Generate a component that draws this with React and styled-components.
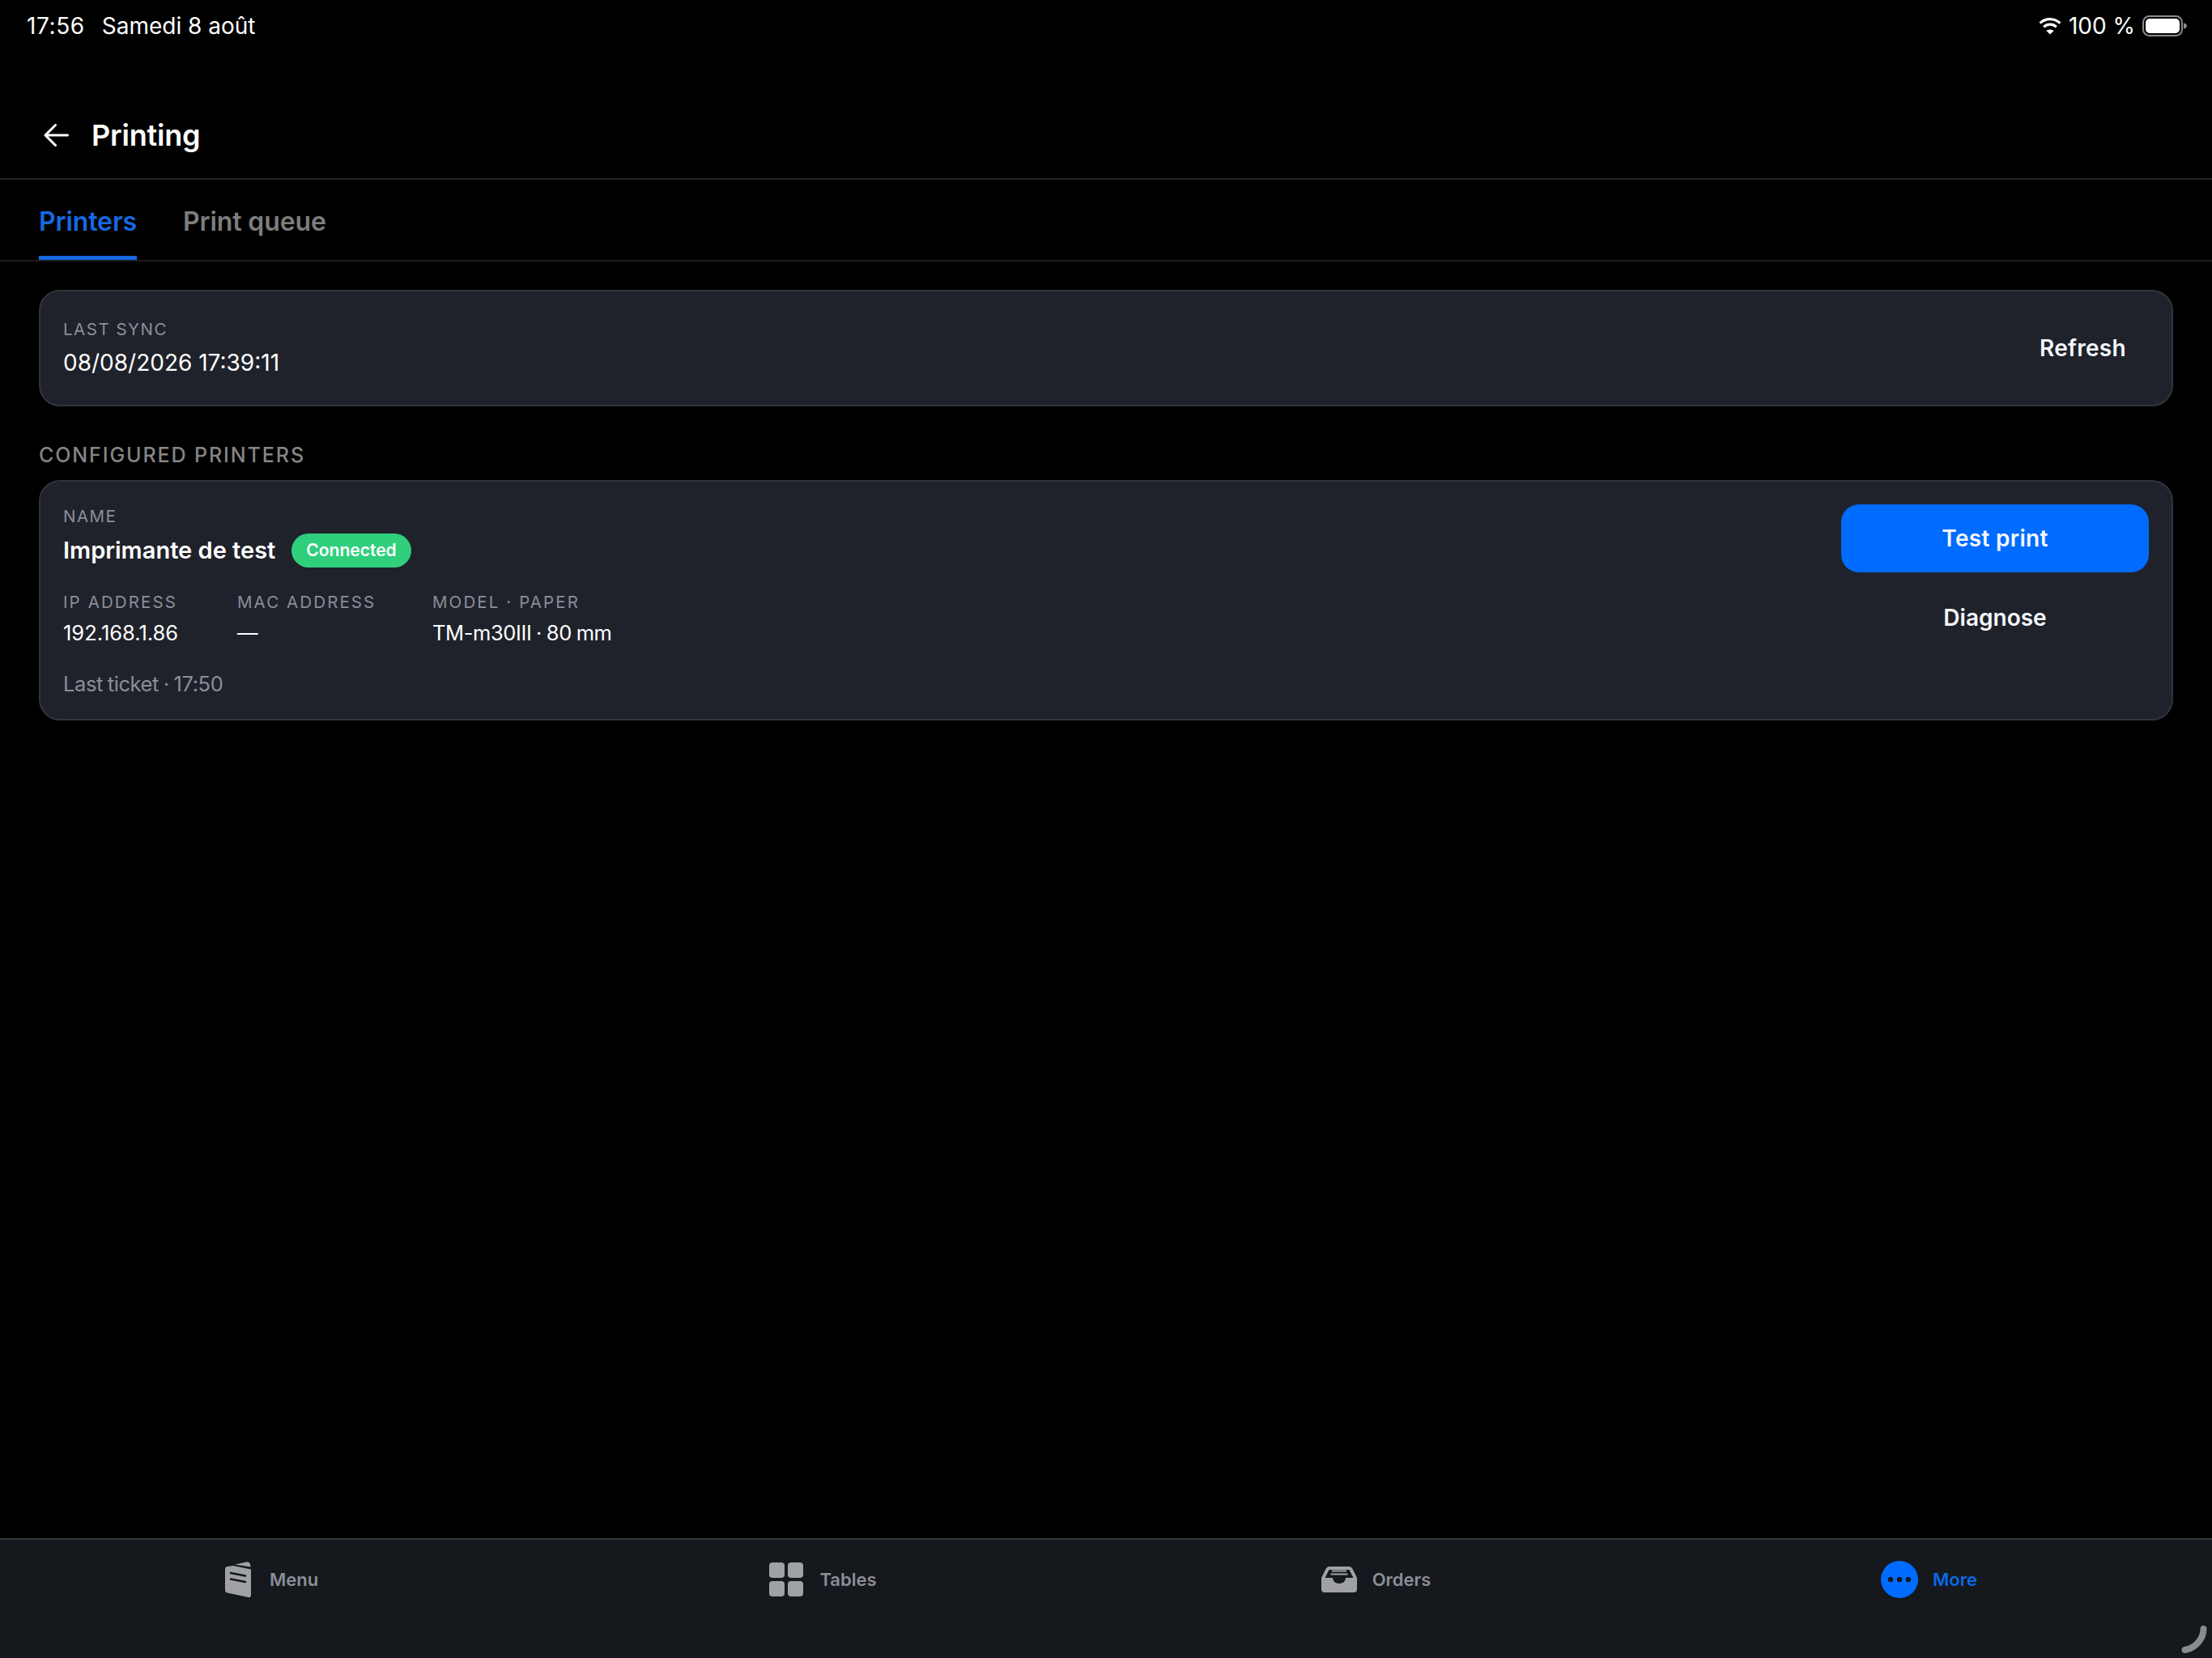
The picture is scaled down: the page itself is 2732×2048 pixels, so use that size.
import React from "react";
import styled, { createGlobalStyle } from "styled-components";

const Global = createGlobalStyle`
  html, body { margin: 0; padding: 0; background: #000; }
  * { box-sizing: border-box; }
  body { font-family: Inter, "Liberation Sans", sans-serif; }
`;

const Page = styled.div`
  position: relative;
  width: 2732px;
  height: 2048px;
  background: #000;
  color: #fff;
  display: flex;
  flex-direction: column;
  overflow: hidden;
`;

const StatusBar = styled.div`
  height: 64px;
  padding: 0 30px 0 33px;
  display: flex;
  align-items: center;
  justify-content: space-between;
  font-size: 28px;
  line-height: 34px;
`;
const StatusGroup = styled.div`
  display: flex;
  align-items: center;
  gap: ${(p) => p.$gap}px;
`;
const Clock = styled.span`
  letter-spacing: 0.6px;
`;

const Header = styled.header`
  height: 158px;
  padding: 50px 0 0 54px;
  display: flex;
  align-items: center;
  gap: 28px;
  border-bottom: 2px solid #232323;
`;
const Title = styled.h1`
  margin: 0;
  font-size: 36px;
  font-weight: 600;
  line-height: 42px;
  letter-spacing: -0.2px;
`;

const Tabs = styled.nav`
  height: 101px;
  padding: 0 48px;
  display: flex;
  gap: 57px;
  border-bottom: 2px solid #1d1d1d;
`;
const Tab = styled.div`
  height: 99px;
  padding-top: 33px;
  font-size: 32px;
  line-height: 38px;
  font-weight: 600;
  letter-spacing: -0.1px;
  color: ${(p) => (p.$active ? "#1769e0" : "#7d7d7d")};
  border-bottom: 5px solid ${(p) => (p.$active ? "#1769e0" : "transparent")};
`;

const Content = styled.main`
  flex: 1;
  padding: 35px 48px 0;
  display: flex;
  flex-direction: column;
`;

const Card = styled.section`
  background: #1f222b;
  border: 2px solid #31343d;
  border-radius: 26px;
  padding: 28px;
  display: flex;
  justify-content: space-between;
`;
const SyncCard = styled(Card)`
  height: 144px;
  align-items: center;
  padding-top: 0;
  padding-bottom: 0;
`;
const PrinterCard = styled(Card)`
  height: 297px;
`;

const Label = styled.div`
  font-size: 20.5px;
  line-height: 25px;
  letter-spacing: 1.5px;
  color: #8b8e99;
`;
const FieldLabel = styled(Label)`
  letter-spacing: 2.1px;
`;
const SyncBlock = styled.div`
  padding-bottom: 2px;
`;
const SyncValue = styled.div`
  margin-top: 12px;
  font-size: 28px;
  line-height: 34px;
`;

const SectionLabel = styled.h2`
  margin: 46px 0 16px;
  font-size: 25px;
  line-height: 29px;
  font-weight: 500;
  letter-spacing: 1.9px;
  color: #858585;
`;

const NameBlock = styled.div`
  margin-top: 2px;
`;
const NameRow = styled.div`
  margin-top: 9px;
  display: flex;
  align-items: center;
  gap: 20px;
`;
const Name = styled.div`
  font-size: 29px;
  line-height: 42px;
  font-weight: 600;
`;
const Badge = styled.span`
  height: 42px;
  padding: 0 18px;
  border-radius: 21px;
  background: #2fcf7c;
  font-size: 21px;
  line-height: 42px;
  font-weight: 600;
`;
const Fields = styled.div`
  margin-top: 30px;
  display: flex;
`;
const Field = styled.div`
  width: ${(p) => p.$w}px;
`;
const FieldValue = styled.div`
  margin-top: 10px;
  font-size: 25.5px;
  line-height: 32px;
  letter-spacing: ${(p) => (p.$tight ? "-0.4px" : "0")};
  word-spacing: ${(p) => (p.$tight ? "-1px" : "0")};
`;
const Foot = styled.div`
  margin-top: 31px;
  font-size: 25.5px;
  line-height: 32px;
  letter-spacing: -0.4px;
  word-spacing: -1px;
  color: #8b8e99;
`;

const Actions = styled.div`
  width: 380px;
  display: flex;
  flex-direction: column;
  gap: 14px;
`;
const Button = styled.button`
  width: ${(p) => (p.$auto ? "auto" : "100%")};
  height: 84px;
  padding: ${(p) => (p.$auto ? "0 28px 0 30px" : "0 30px")};
  border: 0;
  border-radius: 22px;
  background: ${(p) => (p.$primary ? "#006cff" : "transparent")};
  color: #f4f6fb;
  font-family: inherit;
  font-size: 28px;
  font-weight: 600;
  letter-spacing: ${(p) => (p.$primary ? "0.3px" : p.$auto ? "0.3px" : "0")};
`;

const TabBar = styled.footer`
  height: 148px;
  background: #15181d;
  border-top: 2px solid #333437;
  display: grid;
  grid-template-columns: repeat(4, 1fr);
`;
const TabItem = styled.div`
  height: 98px;
  padding-right: ${(p) => p.$pad ?? 16}px;
  display: flex;
  align-items: center;
  justify-content: center;
  gap: ${(p) => p.$gap}px;
  font-size: 22px;
  font-weight: 600;
  color: ${(p) => (p.$active ? "#0a69e6" : "#8c8e97")};
`;

const Handle = styled.svg`
  position: absolute;
  right: 6px;
  bottom: 6px;
`;

const BackIcon = () => (
  <svg width="31" height="28" viewBox="0 0 31 28" fill="none" stroke="#fff" strokeWidth="3" strokeLinecap="round" strokeLinejoin="round">
    <path d="M29.5 14H2M14.5 1.5L2 14l12.5 12.5" />
  </svg>
);

const Wifi = () => (
  <svg width="28" height="22" viewBox="0 0 28 22" fill="none" stroke="#fff" strokeWidth="3.2">
    <path d="M1.6 7.6C8.5 .9 19.5 .9 26.4 7.6" />
    <path d="M6.2 12.2c4.4-4 11.2-4 15.6 0" />
    <path d="M14 21.5l-4.6-4.6c2.6-2 6.6-2 9.2 0z" fill="#fff" stroke="none" />
  </svg>
);

const Battery = () => (
  <svg width="56" height="26" viewBox="0 0 56 26">
    <rect x="1" y="1" width="48" height="24" rx="7.5" fill="none" stroke="#8b8b8b" strokeWidth="2" />
    <rect x="4" y="4" width="42" height="18" rx="5" fill="#fff" />
    <path d="M51 9.5c2.5.5 4 1.800 4 3.500s-1.500 3-4 3.500z" fill="#8b8b8b" />
  </svg>
);

const MenuIcon = () => (
  <svg width="32" height="45" viewBox="0 0 32 45">
    <path d="M3 6L10 5l22 4.500V41q0 3.800-3.500 3L3 38.500Q0 38 0 35V9q0-2.500 3-3z" fill="#a0a1a6" />
    <path d="M12 3.500L27 .3q3-.3 4 2.700l.6 3.500z" fill="#a0a1a6" />
    <path d="M7 14l18 3.500M7 21.500L25 25" stroke="#15181d" strokeWidth="2.600" strokeLinecap="round" />
  </svg>
);

const TablesIcon = () => (
  <svg width="42" height="42" viewBox="0 0 42 42" fill="#a0a1a6">
    <rect x="0" y="0" width="19" height="19" rx="4" />
    <rect x="23" y="0" width="19" height="19" rx="4" />
    <rect x="0" y="23" width="19" height="19" rx="4" />
    <rect x="23" y="23" width="19" height="19" rx="4" />
  </svg>
);

const OrdersIcon = () => (
  <svg width="44" height="32" viewBox="0 0 44 32">
    <path d="M10 0H34q3 0 4.500 3L44 14V28q0 4-4 4H4q-4 0-4-4V14L5.500 3Q7 0 10 0z" fill="#a0a1a6" />
    <path d="M4.500 14L9.500 4H34.500L39.500 14H30Q29.500 21 22 21T14 14z" fill="#15181d" />
    <path d="M13 5.500H31M11.500 9.500H32.500" stroke="#a0a1a6" strokeWidth="2" />
  </svg>
);

const MoreIcon = () => (
  <svg width="46" height="46" viewBox="0 0 46 46">
    <circle cx="23" cy="23" r="23" fill="#006cff" />
    <g fill="#15181d">
      <circle cx="12" cy="23" r="3.200" />
      <circle cx="23" cy="23" r="3.200" />
      <circle cx="34" cy="23" r="3.200" />
    </g>
  </svg>
);

export default function App() {
  return (
    <Page>
      <Global />
      <StatusBar>
        <StatusGroup $gap={21}>
          <Clock>17:56</Clock>
          <span>Samedi 8 août</span>
        </StatusGroup>
        <StatusGroup $gap={9}>
          <Wifi />
          <span>100 %</span>
          <Battery />
        </StatusGroup>
      </StatusBar>
      <Header>
        <BackIcon />
        <Title>Printing</Title>
      </Header>
      <Tabs>
        <Tab $active>Printers</Tab>
        <Tab>Print queue</Tab>
      </Tabs>
      <Content>
        <SyncCard>
          <SyncBlock>
            <Label>LAST SYNC</Label>
            <SyncValue>08/08/2026 17:39:11</SyncValue>
          </SyncBlock>
          <Button $auto>Refresh</Button>
        </SyncCard>
        <SectionLabel>CONFIGURED PRINTERS</SectionLabel>
        <PrinterCard>
          <NameBlock>
            <Label>NAME</Label>
            <NameRow>
              <Name>Imprimante de test</Name>
              <Badge>Connected</Badge>
            </NameRow>
            <Fields>
              <Field $w={215}>
                <FieldLabel>IP ADDRESS</FieldLabel>
                <FieldValue>192.168.1.86</FieldValue>
              </Field>
              <Field $w={241}>
                <FieldLabel>MAC ADDRESS</FieldLabel>
                <FieldValue>—</FieldValue>
              </Field>
              <Field $w={300}>
                <FieldLabel>MODEL · PAPER</FieldLabel>
                <FieldValue $tight>TM-m30III · 80 mm</FieldValue>
              </Field>
            </Fields>
            <Foot>Last ticket · 17:50</Foot>
          </NameBlock>
          <Actions>
            <Button $primary>Test print</Button>
            <Button>Diagnose</Button>
          </Actions>
        </PrinterCard>
      </Content>
      <TabBar>
        <TabItem $gap={23} $pad={12}><MenuIcon /><span>Menu</span></TabItem>
        <TabItem $gap={20}><TablesIcon /><span>Tables</span></TabItem>
        <TabItem $gap={19}><OrdersIcon /><span>Orders</span></TabItem>
        <TabItem $gap={18} $active><MoreIcon /><span>More</span></TabItem>
      </TabBar>
      <Handle width="32" height="34" viewBox="0 0 32 34" fill="none">
        <path d="M27.500 4C27.500 17 17 28 4.500 30" stroke="#8a8b8e" strokeWidth="8" strokeLinecap="round" />
      </Handle>
    </Page>
  );
}
